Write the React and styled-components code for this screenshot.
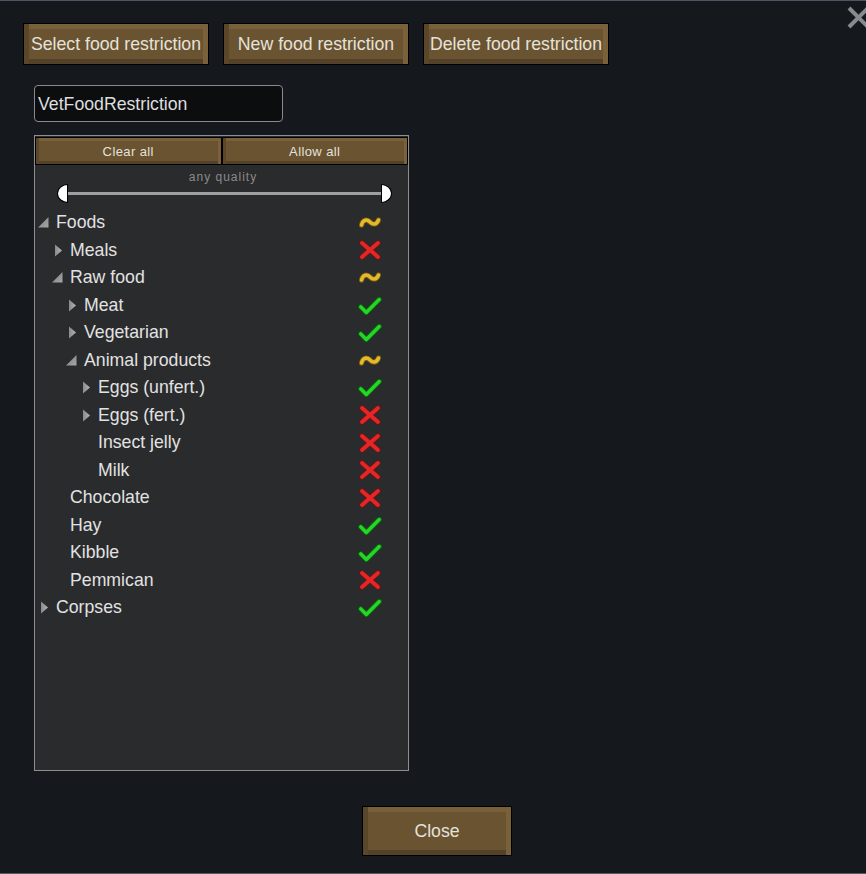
import React from "react";
import styled, { createGlobalStyle, css } from "styled-components";

const Global = createGlobalStyle`
  html, body { margin: 0; padding: 0; background: #15181c; }
  body { font-family: "Liberation Sans", Arial, sans-serif; }
  * { box-sizing: border-box; }
`;

const Window = styled.div`
  position: relative;
  width: 866px;
  height: 874px;
  border-top: 1px solid #4d5462;
  border-bottom: 1px solid #555b66;
  background: #15181c;
  padding: 22px 0 0 23px;
  display: flex;
  flex-direction: column;
  overflow: hidden;
`;

const CloseX = styled.svg`
  position: absolute;
  top: 4px;
  right: -5px;
  width: 25px;
  height: 25px;
`;

const bevel = (w) => css`
  box-shadow: inset ${w}px 0 0 #5a4629, inset -${w}px 0 0 #7a6139,
    inset 0 ${w}px 0 #77603a, inset 0 -${w}px 0 #544129;
`;

const Button = styled.button`
  font-family: "Liberation Sans", Arial, sans-serif;
  font-size: ${(p) => (p.$small ? "13px" : "17.7px")};
  letter-spacing: ${(p) => (p.$small ? "0.4px" : "0")};
  color: #e4e2dc;
  background: #6a5330;
  border: 1px solid #000;
  border-radius: 0;
  padding: 0;
  width: ${(p) => p.$w || "auto"};
  height: ${(p) => p.$h};
  flex: ${(p) => (p.$small ? 1 : "none")};
  display: flex;
  align-items: center;
  justify-content: center;
  ${(p) => bevel(p.$bevel)}
`;

const Toolbar = styled.div`
  display: flex;
  gap: 14px;
`;

const NameField = styled.div`
  margin: 20px 0 0 11px;
  width: 249px;
  height: 37px;
  background: #0c0d0f;
  border: 1px solid #8a8a8a;
  border-radius: 4px;
  color: #dedede;
  font-size: 17.7px;
  display: flex;
  align-items: center;
  padding: 2px 0 0 3px;
`;

const Panel = styled.div`
  margin: 13px 0 0 11px;
  width: 375px;
  height: 636px;
  background: #2a2b2d;
  border: 1px solid #8e8e8e;
  display: flex;
  flex-direction: column;
`;

const ButtonRow = styled.div`
  display: flex;
  padding: 1px 0 1px 0;
`;

const QualityLabel = styled.div`
  height: 16px;
  margin-top: 3px;
  line-height: 16px;
  text-align: center;
  font-size: 12px;
  letter-spacing: 1px;
  color: #8a8a8a;
  padding-left: 3px;
`;

const Slider = styled.div`
  display: flex;
  align-items: center;
  height: 19px;
  margin-top: -1px;
  padding: 0 16px 0 22px;
`;

const Handle = styled.div`
  width: 11px;
  height: 19px;
  background: #fff;
  border: 1px solid #000;
  ${(p) =>
    p.$side === "left"
      ? css`
          border-radius: 11px 0 0 11px / 9.5px 0 0 9.5px;
        `
      : css`
          border-radius: 0 11px 11px 0 / 0 9.5px 9.5px 0;
        `}
`;

const Track = styled.div`
  flex: 1;
  height: 3px;
  background: #a0a0a0;
`;

const Tree = styled.div`
  padding-top: 6px;
  display: flex;
  flex-direction: column;
`;

const Row = styled.div`
  height: 27.5px;
  display: flex;
  align-items: center;
  padding-left: ${(p) => 3 + p.$level * 14}px;
  padding-right: 26px;
`;

const ArrowSlot = styled.div`
  width: 18px;
  height: 27px;
  display: flex;
  align-items: center;
  flex: none;
`;

const Label = styled.div`
  flex: 1;
  font-size: 17.7px;
  color: #e2e2e2;
  white-space: nowrap;
`;

const StateSlot = styled.div`
  width: 24px;
  height: 24px;
  display: flex;
  align-items: center;
  justify-content: center;
  flex: none;
`;

const Footer = styled.div`
  margin-top: 35px;
  display: flex;
  padding-left: 339px;
`;

function Arrow({ kind }) {
  if (kind === "open") {
    return (
      <svg width="11" height="11" viewBox="0 0 11 11">
        <defs>
          <linearGradient id="ag" x1="0" y1="0" x2="1" y2="1">
            <stop offset="0" stopColor="#7a7a7a" />
            <stop offset="1" stopColor="#a8a8a8" />
          </linearGradient>
        </defs>
        <polygon points="0,10.5 10.5,10.5 10.5,0" fill="url(#ag)" />
      </svg>
    );
  }
  if (kind === "closed") {
    return (
      <svg width="12" height="13" viewBox="0 0 12 13">
        <defs>
          <linearGradient id="cg" x1="0" y1="0" x2="1" y2="0">
            <stop offset="0" stopColor="#8a8a8a" />
            <stop offset="1" stopColor="#b4b4b4" />
          </linearGradient>
        </defs>
        <polygon points="3,0.5 10,6.5 3,12.5" fill="url(#cg)" />
      </svg>
    );
  }
  return null;
}

function StateIcon({ s }) {
  if (s === "part") {
    return (
      <svg width="22" height="13" viewBox="0 0 22 13">
        <path
          d="M2.5,9 C4,3.5 8,3 11,6 C14,9 17.5,9 19.5,4"
          fill="none"
          stroke="#6e5410"
          strokeWidth="5.5"
          strokeLinecap="round"
        />
        <path
          d="M2.5,9 C4,3.5 8,3 11,6 C14,9 17.5,9 19.5,4"
          fill="none"
          stroke="#e4b92a"
          strokeWidth="3.6"
          strokeLinecap="round"
        />
      </svg>
    );
  }
  if (s === "no") {
    return (
      <svg width="22" height="20" viewBox="0 0 22 20">
        <g strokeLinecap="round" fill="none">
          <path d="M3,3 L19,17 M19,3 L3,17" stroke="#6e1414" strokeWidth="5.5" />
          <path d="M3,3 L19,17 M19,3 L3,17" stroke="#e42626" strokeWidth="3.8" />
        </g>
      </svg>
    );
  }
  return (
    <svg width="26" height="21" viewBox="0 0 26 21">
      <g strokeLinecap="round" strokeLinejoin="round" fill="none">
        <path d="M3,12 L9,18 L23,4" stroke="#0f6010" strokeWidth="5.8" />
        <path d="M3,12 L9,18 L23,4" stroke="#24d625" strokeWidth="3.8" />
      </g>
    </svg>
  );
}

const rows = [
  { t: "Foods", l: 0, a: "open", s: "part" },
  { t: "Meals", l: 1, a: "closed", s: "no" },
  { t: "Raw food", l: 1, a: "open", s: "part" },
  { t: "Meat", l: 2, a: "closed", s: "yes" },
  { t: "Vegetarian", l: 2, a: "closed", s: "yes" },
  { t: "Animal products", l: 2, a: "open", s: "part" },
  { t: "Eggs (unfert.)", l: 3, a: "closed", s: "yes" },
  { t: "Eggs (fert.)", l: 3, a: "closed", s: "no" },
  { t: "Insect jelly", l: 3, a: null, s: "no" },
  { t: "Milk", l: 3, a: null, s: "no" },
  { t: "Chocolate", l: 1, a: null, s: "no" },
  { t: "Hay", l: 1, a: null, s: "yes" },
  { t: "Kibble", l: 1, a: null, s: "yes" },
  { t: "Pemmican", l: 1, a: null, s: "no" },
  { t: "Corpses", l: 0, a: "closed", s: "yes" },
];

export default function App() {
  return (
    <>
      <Global />
      <Window>
        <CloseX viewBox="0 0 25 25">
          <path
            d="M3,3 L22,22 M22,3 L3,22"
            stroke="#878b90"
            strokeWidth="4"
            fill="none"
          />
        </CloseX>
        <Toolbar>
          <Button $w="186px" $h="42px" $bevel={5}>Select food restriction</Button>
          <Button $w="186px" $h="42px" $bevel={5}>New food restriction</Button>
          <Button $w="186px" $h="42px" $bevel={5}>Delete food restriction</Button>
        </Toolbar>
        <NameField>VetFoodRestriction</NameField>
        <Panel>
          <ButtonRow>
            <Button $small $h="28px" $bevel={3}>Clear all</Button>
            <Button $small $h="28px" $bevel={3}>Allow all</Button>
          </ButtonRow>
          <QualityLabel>any quality</QualityLabel>
          <Slider>
            <Handle $side="left" />
            <Track />
            <Handle $side="right" />
          </Slider>
          <Tree>
            {rows.map((r) => (
              <Row key={r.t} $level={r.l}>
                <ArrowSlot>
                  <Arrow kind={r.a} />
                </ArrowSlot>
                <Label>{r.t}</Label>
                <StateSlot>
                  <StateIcon s={r.s} />
                </StateSlot>
              </Row>
            ))}
          </Tree>
        </Panel>
        <Footer>
          <Button $w="150px" $h="50px" $bevel={5}>Close</Button>
        </Footer>
      </Window>
    </>
  );
}
